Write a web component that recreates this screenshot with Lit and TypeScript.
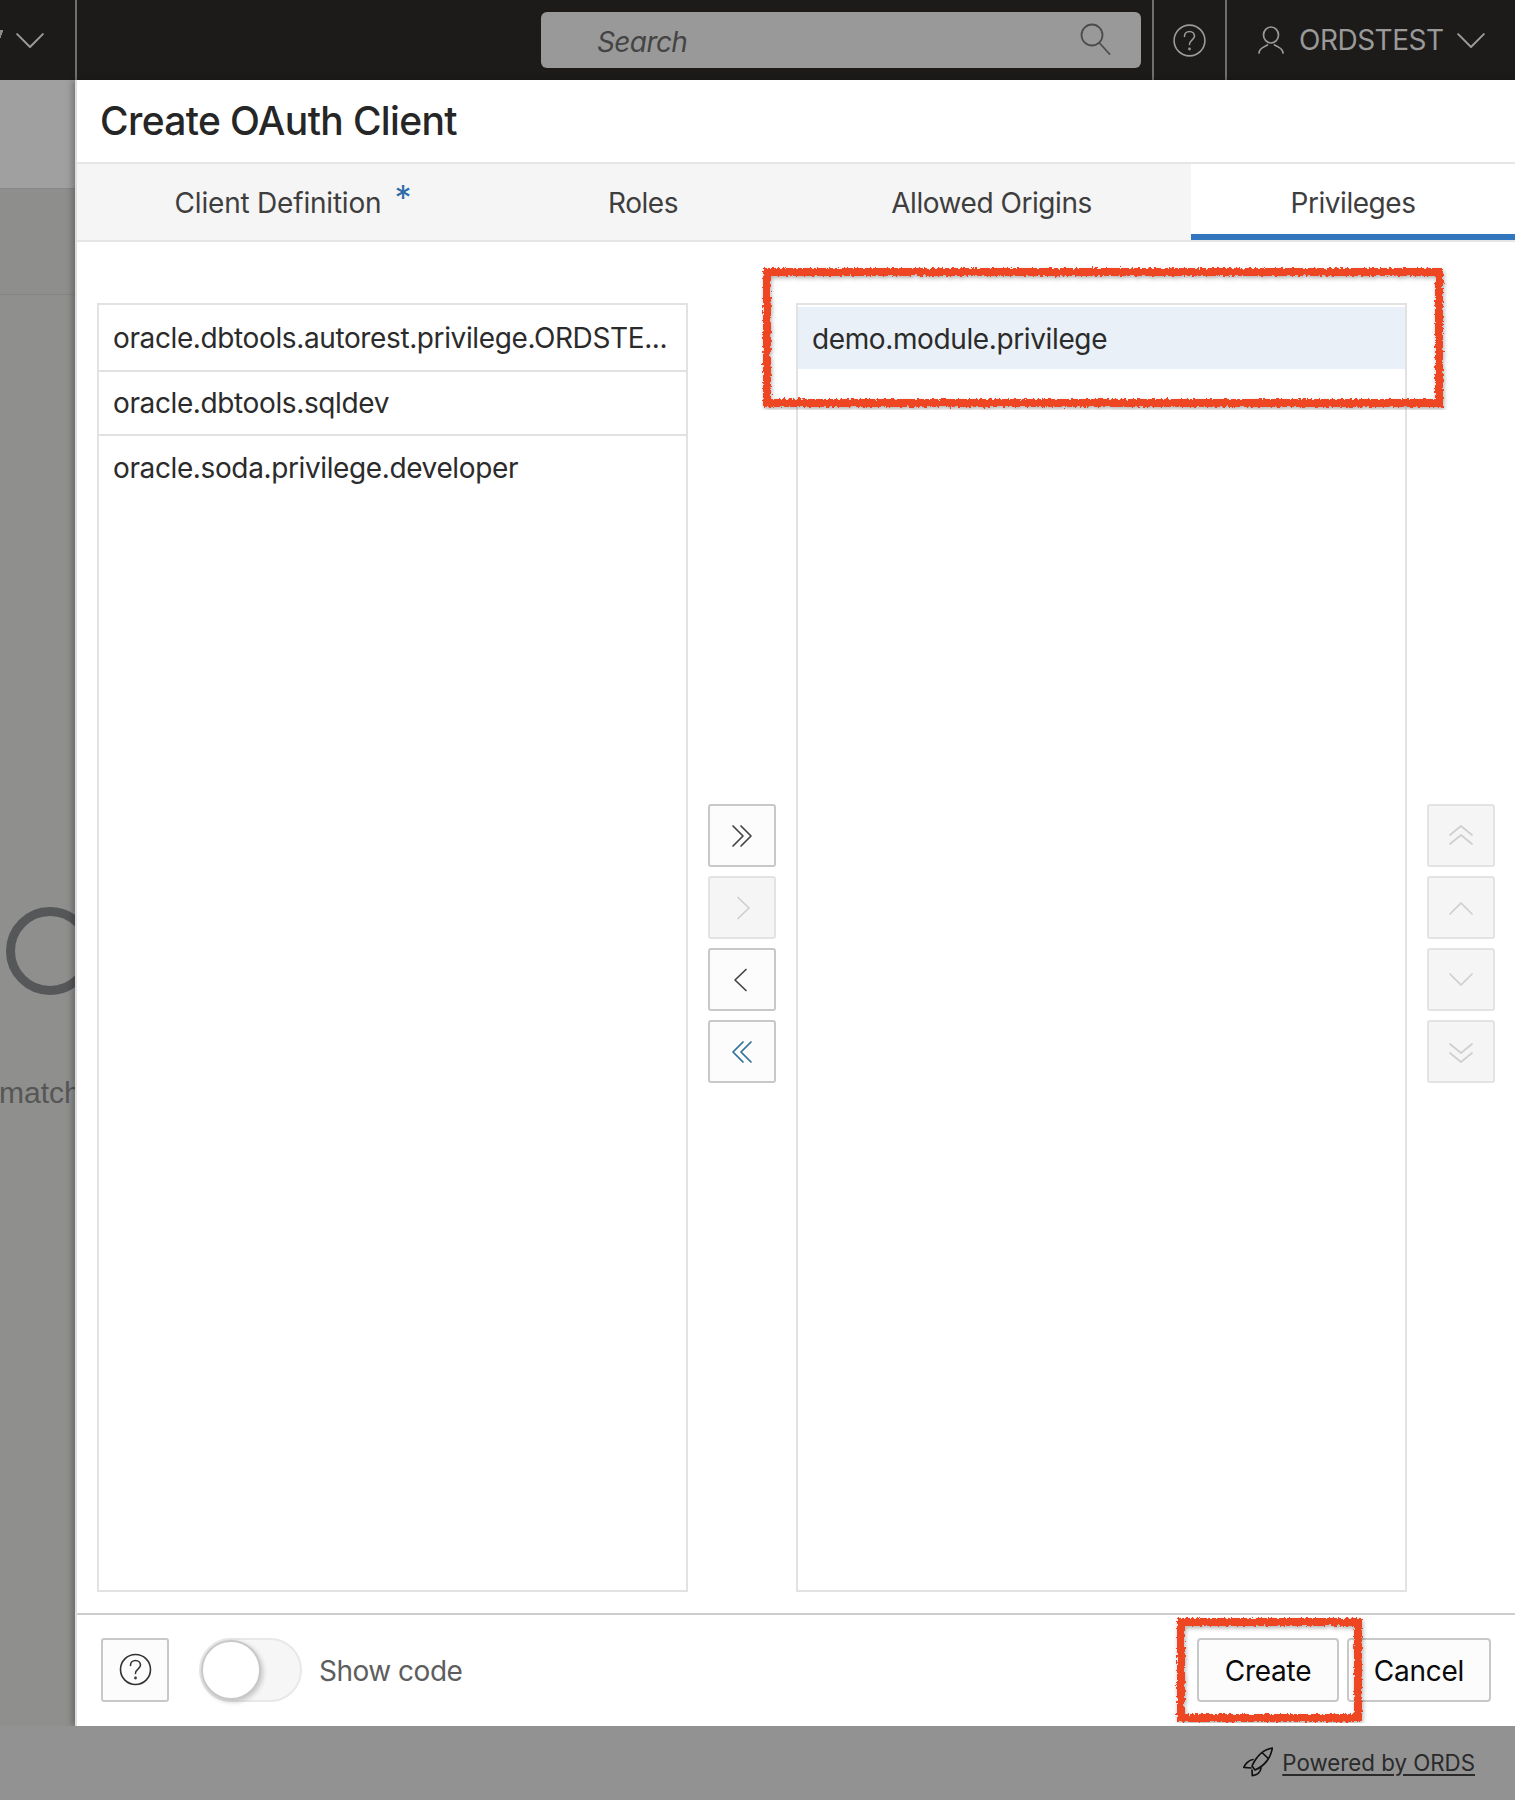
import { LitElement, html, css, svg } from "lit";
import { customElement } from "lit/decorators.js";

const chev = (d: string, w = 24, h = 24) => html`<svg width=${w} height=${h} viewBox="0 0 24 24" fill="none" stroke="currentColor" stroke-width="1.7" stroke-linecap="round" stroke-linejoin="round"><path d=${d}></path></svg>`;

const mover = [
  { d: "M3 2l10 10L3 22M11 2l10 10-10 10", cls: "" },
  { d: "M8 1.5l11 10.5L8 22.5", cls: "off" },
  { d: "M16 1.5L5 12l11 10.5", cls: "" },
  { d: "M21 2L11 12l10 10M13 2L3 12l10 10", cls: "blue" },
];
const order = [
  "M1 11l11-9 11 9M1 20l11-9 11 9",
  "M1 18L12 7l11 11",
  "M1 6l11 11L23 6",
  "M1 4l11 9 11-9M1 13l11 9 11-9",
];

@customElement("app-root")
export class AppRoot extends LitElement {
  static styles = css`
    :host { display: block; width: 1515px; height: 1800px; font-family: Inter, "Noto Sans", sans-serif; position: relative; overflow: hidden; }
    * { box-sizing: border-box; }
    .page { display: grid; grid-template-rows: 80px 1646px 74px; height: 1800px; }
    .top { display: flex; align-items: center; background: #1c1b19; color: #9b9b9b; }
    .top-left { width: 77px; height: 80px; flex: none; border-right: 2px solid #6f6f6f; display: flex; align-items: center; overflow: hidden; color: #9a9a9a; }
    .tail { width: 3px; height: 8px; flex: none; margin: -12px 13px 0 0; background: linear-gradient(to bottom right, #8a8a8a 0 55%, transparent 60%); }
    .search { margin-left: 464px; width: 600px; height: 56px; background: #999; border-radius: 6px; display: flex; align-items: center; justify-content: space-between; padding: 0 30px 0 56px; color: #444; font-size: 28px; font-style: italic; letter-spacing: -0.6px; }
    .search span { margin-top: 3px; }
    .search svg { margin-top: -3px; }
    .help { margin-left: 11px; width: 75px; height: 80px; flex: none; border-left: 2px solid #6f6f6f; border-right: 2px solid #6f6f6f; display: flex; align-items: center; justify-content: center; }
    .user { display: flex; align-items: center; padding-left: 31px; font-size: 28px; letter-spacing: -0.5px; color: #9a9a9a; }
    .user span { margin: 0 13px 0 15px; }
    .mid { display: flex; background: #8f8f8e; min-height: 0; }
    .side { width: 75px; flex: none; overflow: hidden; display: flex; flex-direction: column; color: #565656; }
    .side-a { height: 108px; flex: none; background: #a0a0a0; }
    .side-b { height: 107px; flex: none; background: #8e8e8d; border-top: 1px solid #878787; border-bottom: 1px solid #858585; }
    .ring { margin: 612px 0 0 6px; width: 88px; height: 88px; flex: none; border-radius: 50%; border: 9px solid #565759; }
    .match { margin-top: 80px; margin-left: -1px; font-size: 30px; line-height: 36px; white-space: nowrap; font-family: "Liberation Sans", sans-serif; }
    .dialog { flex: 1; background: #fff; display: flex; flex-direction: column; border-left: 2px solid #dedede; box-shadow: -3px 0 6px rgba(0,0,0,.25); min-width: 0; }
    .title { height: 82px; flex: none; display: flex; align-items: center; padding: 0 0 2px 23px; font-size: 39px; font-weight: 500; letter-spacing: -0.65px; color: #262626; }
    .tabs { height: 80px; flex: none; display: grid; grid-template-columns: 417px 298px 399px 1fr; background: #f5f5f5; border-top: 2px solid #e6e6e6; border-bottom: 2px solid #e6e6e6; }
    .tab { display: flex; align-items: center; justify-content: center; font-size: 28px; letter-spacing: -0.45px; color: #3e3e3e; padding-top: 2px; }
    .tab.on { background: #fff; border-bottom: 6px solid #3277bd; padding-top: 8px; }
    .star { color: #2f6ca8; align-self: flex-start; font-size: 34px; line-height: 34px; margin: 15px -28px 0 13px; width: 14px; }
    .first { padding-right: 16px; letter-spacing: -0.2px; }
    .body { flex: 1; min-height: 0; display: flex; gap: 20px; padding: 61px 20px 21px 20px; }
    .list { border: 2px solid #e2e2e2; overflow: hidden; font-size: 28px; letter-spacing: -0.38px; color: #2b2b2b; }
    .left { width: 591px; flex: none; }
    .right { width: 611px; flex: none; }
    .row { height: 64px; display: flex; align-items: center; padding-left: 14px; border-bottom: 2px solid #e2e2e2; white-space: nowrap; }
    .row:first-child { height: 67px; }
    .row:last-child { border-bottom: none; }
    .row.sel { background: #e9f0f7; height: 62px; margin-top: 2px; border-bottom: none; padding-top: 2px; }
    .btns { width: 68px; flex: none; display: flex; flex-direction: column; justify-content: center; gap: 9px; padding-bottom: 8px; }
    .btn { width: 68px; height: 63px; flex: none; border: 2px solid #c8c8c8; border-radius: 3px; background: #fcfcfc; color: #444; display: flex; align-items: center; justify-content: center; }
    .btn.off { background: #f5f5f5; border-color: #e3e3e3; color: #cfcfcf; }
    .btn.blue { color: #2d6f97; }
    .foot { height: 113px; flex: none; border-top: 2px solid #cdcdcd; display: flex; align-items: center; padding: 0 24px 2px 24px; }
    .helpbtn { height: 64px; }
    .toggle { margin-left: 30px; width: 103px; height: 64px; border-radius: 32px; background: #f6f6f6; border: 2px solid #e8e8e8; flex: none; display: flex; align-items: center; }
    .knob { width: 60px; height: 60px; border-radius: 50%; background: #fff; border: 2px solid #c8c8c8; box-shadow: 2px 2px 5px rgba(0,0,0,.2); }
    .lbl { margin-left: 17px; padding-top: 2px; font-size: 28px; color: #5e5e5e; letter-spacing: -0.5px; flex: 1; }
    .act { height: 64px; border: 2px solid #c8c8c8; border-radius: 4px; background: #fcfcfc; display: flex; align-items: center; justify-content: center; padding-top: 2px; font-size: 28px; color: #0a0a0a; letter-spacing: -0.25px; flex: none; }
    .create { width: 142px; margin-right: 8px; }
    .cancel { width: 144px; }
    .bottom { background: #929292; display: flex; align-items: center; justify-content: flex-end; padding: 0 40px 2px 0; gap: 9px; color: #2a2a2a; font-size: 22.3px; }
    .bottom a { color: #2a2a2a; text-decoration: underline; text-underline-offset: 3px; }
    .mark { position: absolute; pointer-events: none; }
    .mark rect { fill: none; stroke: #ee4423; stroke-width: 8; }
  `;

  private mark(x: number, y: number, w: number, h: number) {
    return html`<svg class="mark" style="left:${x - 12}px;top:${y - 12}px" width=${w + 24} height=${h + 24} viewBox="0 0 ${w + 24} ${h + 24}">
      ${svg`<defs><filter id="rough${x}" x="-5%" y="-5%" width="110%" height="110%" filterUnits="objectBoundingBox">
        <feTurbulence type="fractalNoise" baseFrequency="0.35" numOctaves="2" seed="4"></feTurbulence>
        <feDisplacementMap in="SourceGraphic" scale="5"></feDisplacementMap>
        <feDropShadow dx="1" dy="2" stdDeviation="2" flood-color="#000" flood-opacity=".3"></feDropShadow>
      </filter></defs>
      <rect x="15" y="15" width=${w - 6} height=${h - 6} filter="url(#rough${x})"></rect>`}
    </svg>`;
  }

  render() {
    return html`
      <div class="page">
        <header class="top">
          <div class="top-left"><div class="tail"></div>${chev("M1 7l11 11L23 7", 28, 28)}</div>
          <div class="search"><span>Search</span>
            <svg width="32" height="32" viewBox="0 0 32 32" fill="none" stroke="#4c4c4c" stroke-width="1.8" stroke-linecap="round"><circle cx="13" cy="12" r="10.5"></circle><path d="M20.5 20l10 11"></path></svg>
          </div>
          <div class="help">
            <svg width="33" height="33" viewBox="0 0 33 33" fill="none" stroke="#9a9a9a" stroke-width="1.6" stroke-linecap="round"><circle cx="16.5" cy="16.5" r="15.4"></circle><path d="M11.5 12.5c0-3 2.2-5 5-5s5 2 5 4.6c0 3.8-5 3.8-5 8.4"></path><circle cx="16.5" cy="25" r=".6"></circle></svg>
          </div>
          <div class="user">
            <svg width="26" height="28" viewBox="0 0 26 28" fill="none" stroke="#9a9a9a" stroke-width="1.7" stroke-linecap="round"><ellipse cx="13" cy="9" rx="7.5" ry="8"></ellipse><path d="M1 27c0-5 5-6 8.5-8M25 27c0-5-5-6-8.5-8"></path></svg>
            <span>ORDSTEST</span>
            ${chev("M1 7l11 11L23 7", 28, 28)}
          </div>
        </header>
        <div class="mid">
          <aside class="side">
            <div class="side-a"></div>
            <div class="side-b"></div>
            <div class="ring"></div>
            <div class="match">match</div>
          </aside>
          <section class="dialog">
            <div class="title">Create OAuth Client</div>
            <nav class="tabs">
              <div class="tab first">Client Definition<span class="star">*</span></div>
              <div class="tab">Roles</div>
              <div class="tab">Allowed Origins</div>
              <div class="tab on">Privileges</div>
            </nav>
            <div class="body">
              <div class="list left">
                <div class="row">oracle.dbtools.autorest.privilege.ORDSTE...</div>
                <div class="row">oracle.dbtools.sqldev</div>
                <div class="row">oracle.soda.privilege.developer</div>
              </div>
              <div class="btns">
                ${mover.map((m) => html`<div class="btn ${m.cls}">${chev(m.d)}</div>`)}
              </div>
              <div class="list right">
                <div class="row sel">demo.module.privilege</div>
              </div>
              <div class="btns">
                ${order.map((d) => html`<div class="btn off">${chev(d)}</div>`)}
              </div>
            </div>
            <footer class="foot">
              <div class="btn helpbtn">
                <svg width="33" height="33" viewBox="0 0 33 33" fill="none" stroke="#333" stroke-width="1.6" stroke-linecap="round"><circle cx="16.5" cy="16.5" r="15"></circle><path d="M11.5 12.5c0-3 2.2-5 5-5s5 2 5 4.6c0 3.8-5 3.8-5 8.4"></path><circle cx="16.5" cy="25" r=".6"></circle></svg>
              </div>
              <div class="toggle"><div class="knob"></div></div>
              <div class="lbl">Show code</div>
              <div class="act create">Create</div>
              <div class="act cancel">Cancel</div>
            </footer>
          </section>
        </div>
        <footer class="bottom">
          <svg width="30" height="30" viewBox="0 0 30 30" fill="none" stroke="#111" stroke-width="1.7" stroke-linejoin="round" stroke-linecap="round">
            <path d="M29.3 1C22 2 14 8 9 19l3 4c10-4 16-13 17.300-22z"></path>
            <path d="M19.500 6l5.800 5.500"></path>
            <path d="M10 12.500C6 13 2 17 .8 20.300L8 21"></path>
            <path d="M18 21c-.5 4-4 7-8.700 7.700L9 23"></path>
          </svg>
          <a>Powered by ORDS</a>
        </footer>
      </div>
      ${this.mark(764, 269, 678, 137)}
      ${this.mark(1178, 1619, 183, 102)}
    `;
  }
}
